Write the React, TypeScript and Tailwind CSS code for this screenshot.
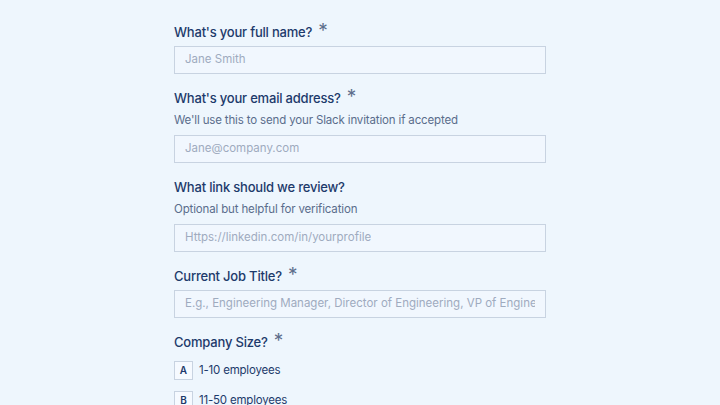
import React from "react";

function Label({ text, required }: { text: string; required?: boolean }) {
  return (
    <div className="flex h-[20px] items-center text-[13px] font-medium tracking-[-0.2px] text-[#1d3a6b]">
      <span>{text}</span>
      {required && (
        <span className="relative -top-[3px] ml-[6px] text-[19px] leading-none font-normal text-[#5d6e8c]">*</span>
      )}
    </div>
  );
}

function Helper({ text }: { text: string }) {
  return (
    <p className="mt-[2px] h-[18px] text-[11.5px] leading-[18px] tracking-[-0.15px] text-[#5a6d8c]">{text}</p>
  );
}

function Field({ placeholder }: { placeholder: string }) {
  return (
    <div className="flex h-[28px] w-full items-center border border-[#c8d3e1] bg-[#f1f7fe] px-[10px]">
      <span className="block overflow-hidden whitespace-nowrap text-[11.5px] text-[#9fabbf]">{placeholder}</span>
    </div>
  );
}

function Option({ letter, text }: { letter: string; text: string }) {
  return (
    <div className="flex items-center gap-[6px]">
      <div className="flex h-[19px] w-[19px] items-center justify-center border border-[#c8d3e1] bg-[#f6faff] text-[10px] font-semibold text-[#1d3a6b]">
        {letter}
      </div>
      <span className="text-[11.5px] tracking-[-0.2px] text-[#1d3a6b]">{text}</span>
    </div>
  );
}

export default function App() {
  return (
    <div
      className="h-[405px] w-[720px] overflow-hidden bg-[#eef6fd]"
      style={{ fontFamily: 'Inter, "Liberation Sans", sans-serif' }}
    >
      <div className="mx-auto flex w-[372px] flex-col pt-[23px]">
        <Label text="What's your full name?" required />
        <div className="mt-[3px]">
          <Field placeholder="Jane Smith" />
        </div>

        <div className="mt-[15px]">
          <Label text="What's your email address?" required />
        </div>
        <Helper text="We'll use this to send your Slack invitation if accepted" />
        <div className="mt-[6px]">
          <Field placeholder="Jane@company.com" />
        </div>

        <div className="mt-[15px]">
          <Label text="What link should we review?" />
        </div>
        <Helper text="Optional but helpful for verification" />
        <div className="mt-[6px]">
          <Field placeholder="Https://linkedin.com/in/yourprofile" />
        </div>

        <div className="mt-[15px]">
          <Label text="Current Job Title?" required />
        </div>
        <div className="mt-[3px]">
          <Field placeholder="E.g., Engineering Manager, Director of Engineering, VP of Engineering" />
        </div>

        <div className="mt-[15px]">
          <Label text="Company Size?" required />
        </div>
        <div className="mt-[8px] flex flex-col gap-[11px]">
          <Option letter="A" text="1-10 employees" />
          <Option letter="B" text="11-50 employees" />
          <Option letter="C" text="51-200 employees" />
        </div>
      </div>
    </div>
  );
}
